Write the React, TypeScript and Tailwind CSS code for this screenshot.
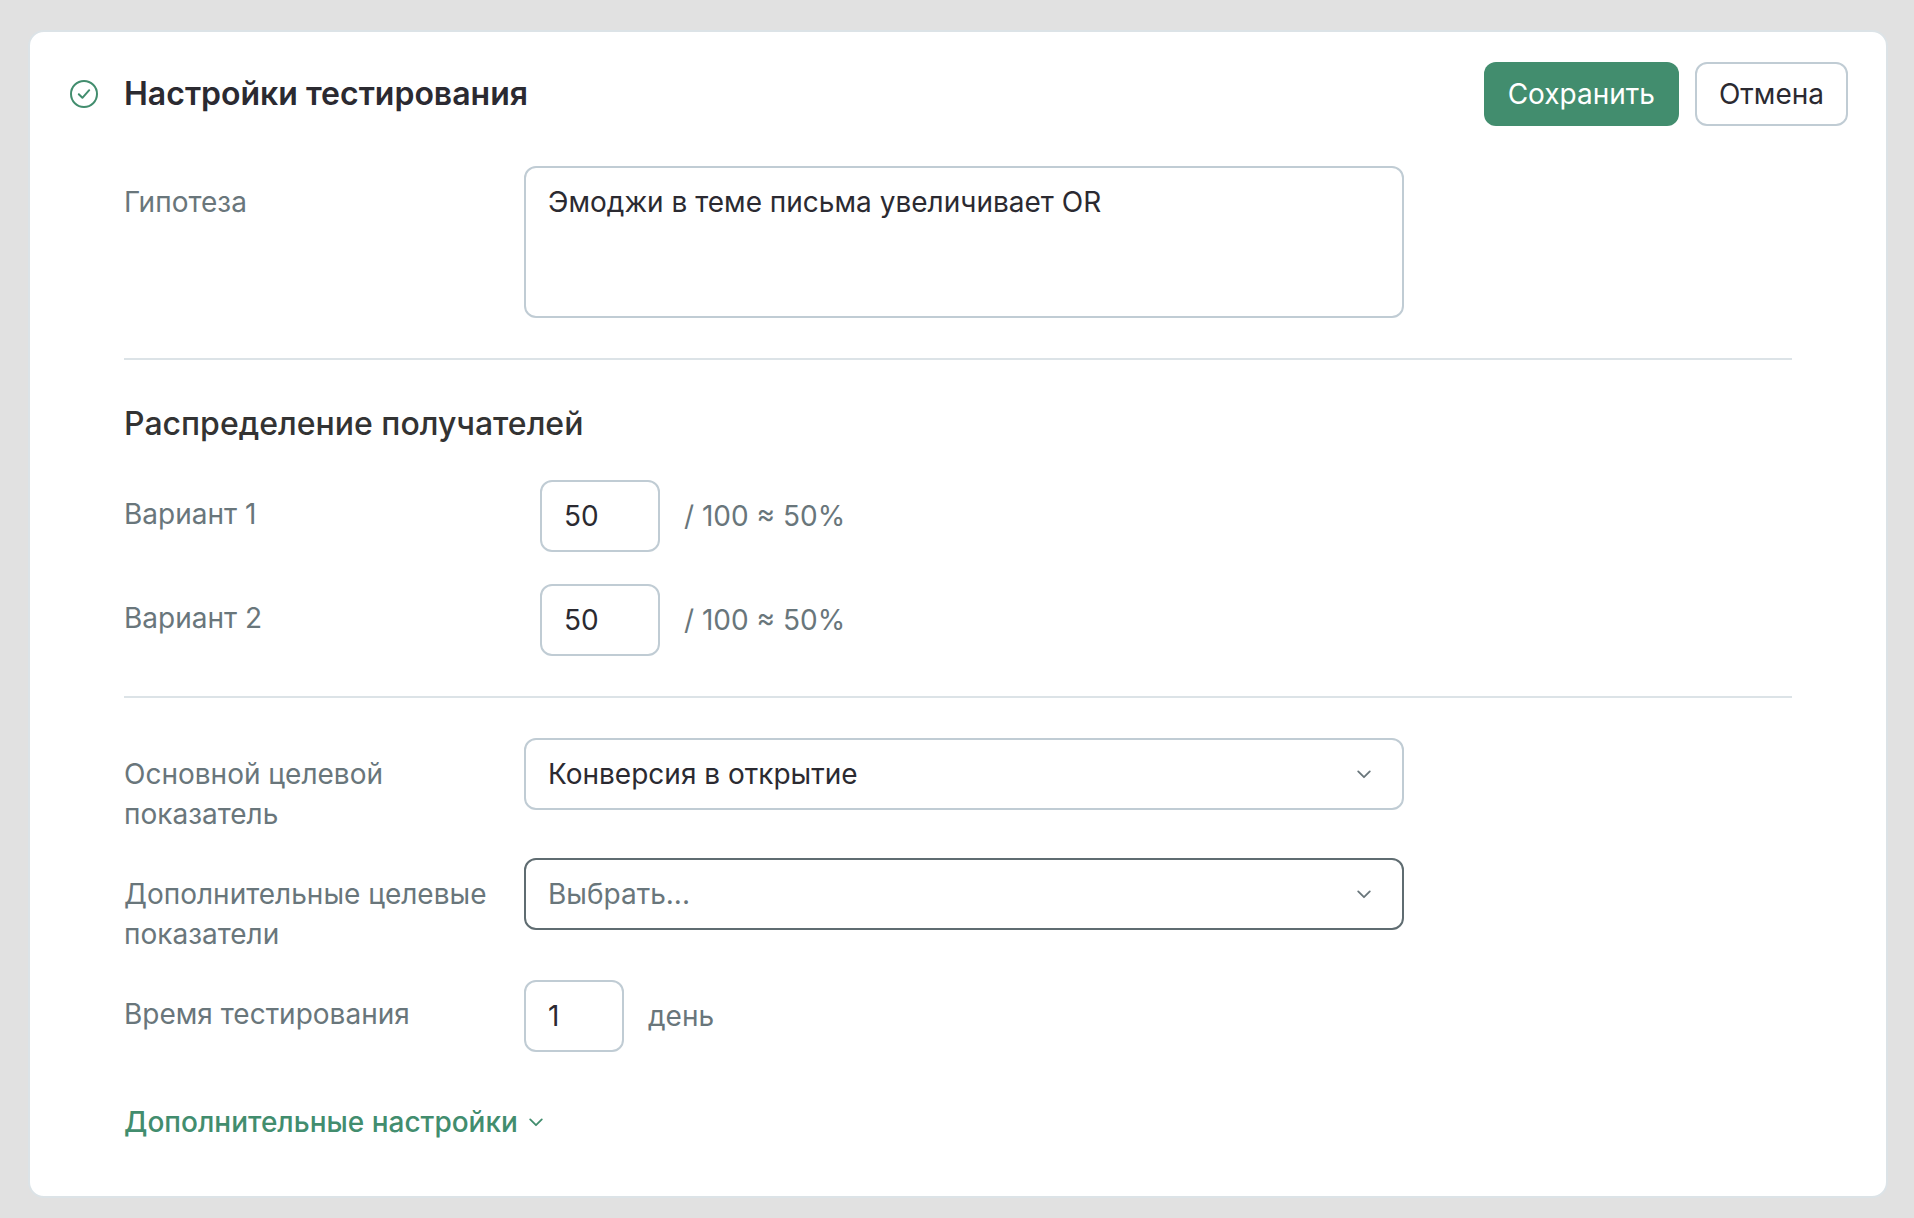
import * as React from "react";

interface IRowProps {
  label: string;
  htmlFor: string;
  children: React.ReactNode;
}

const Row: React.FC<IRowProps> = ({ label, htmlFor, children }) => (
  <div className="flex flex-row items-start">
    <label
      htmlFor={htmlFor}
      className="w-[400px] shrink-0 pt-4 pr-6 leading-10 text-[#69767b]"
    >
      {label}
    </label>
    {children}
  </div>
);

const Chevron: React.FC<{ classes?: string }> = ({ classes = "" }) => (
  <svg
    viewBox="0 0 16 16"
    fill="none"
    stroke="currentColor"
    strokeWidth="1.8"
    strokeLinecap="round"
    strokeLinejoin="round"
    aria-hidden="true"
    className={`size-4 ${classes}`}
  >
    <path d="M2.2 5.4 L8 11.2 L13.8 5.4" />
  </svg>
);

interface ISelectProps {
  id: string;
  options: string[];
  classes: string;
}

const Select: React.FC<ISelectProps> = ({ id, options, classes }) => (
  <div className="relative w-full max-w-[880px]">
    <select
      id={id}
      className={`block h-[72px] w-full appearance-none rounded-xl border-2 bg-white pl-[22px] pr-16 outline-none ${classes}`}
    >
      {options.map((option) => (
        <option key={option}>{option}</option>
      ))}
    </select>
    <Chevron classes="pointer-events-none absolute right-8 top-7 text-[#69767b]" />
  </div>
);

interface INumberProps {
  id: string;
  value: string;
  setValue: (value: string) => void;
  suffix: string;
  classes: string;
}

const NumberField: React.FC<INumberProps> = ({
  id,
  value,
  setValue,
  suffix,
  classes,
}) => (
  <div className={`mt-0.5 flex flex-row items-center gap-6 ${classes}`}>
    <input
      id={id}
      type="text"
      inputMode="numeric"
      value={value}
      onChange={(e) => setValue(e.target.value)}
      className="h-[72px] w-full rounded-xl border-2 border-[#c0ccd4] px-[22px] outline-none"
    />
    <span className="whitespace-nowrap text-[#69767b]">{suffix}</span>
  </div>
);

const App: React.FC = () => {
  const [hypothesis, setHypothesis] = React.useState<string>(
    "Эмоджи в теме письма увеличивает OR"
  );
  const [variants, setVariants] = React.useState<string[]>(["50", "50"]);
  const [days, setDays] = React.useState<string>("1");

  const changeVariant = (index: number, value: string) => {
    setVariants(variants.map((v, i) => (i === index ? value : v)));
  };

  return (
    <div
      className="min-h-screen bg-[#e1e1e1] pl-7 pr-[26px] pt-[30px] pb-5
      font-['Inter',sans-serif] text-[28px] leading-10 text-[#2b2a31]"
    >
      <main className="rounded-2xl border-2 border-[#dce3e7] bg-white pt-[30px] pb-[54px]">
        <header className="flex flex-row items-center pl-10 pr-[38px]">
          <svg
            viewBox="0 0 28 28"
            fill="none"
            stroke="currentColor"
            strokeWidth="2"
            aria-hidden="true"
            className="mr-[26px] size-7 shrink-0 text-[#428d6e]"
          >
            <circle cx="14" cy="14" r="13" />
            <path
              d="M8.8 14.2 L12.4 17.8 L19.2 10.2"
              strokeLinecap="round"
              strokeLinejoin="round"
            />
          </svg>
          <h1 className="grow text-[32px] font-semibold">
            Настройки тестирования
          </h1>
          <div className="flex flex-row gap-4">
            <button
              type="button"
              className="h-16 rounded-xl bg-[#428d6e] px-6 text-white"
            >
              Сохранить
            </button>
            <button
              type="button"
              className="h-16 rounded-xl border-2 border-[#c0ccd4] bg-white px-[22px]"
            >
              Отмена
            </button>
          </div>
        </header>

        <form className="px-[94px] pt-10">
          <section className="border-b-2 border-[#dce3e7] pb-10">
            <Row label="Гипотеза" htmlFor="hypothesis">
              <textarea
                id="hypothesis"
                value={hypothesis}
                onChange={(e) => setHypothesis(e.target.value)}
                className="block h-[152px] w-full max-w-[880px] resize-none rounded-xl
                border-2 border-[#c0ccd4] px-[22px] py-3.5 outline-none"
              />
            </Row>
          </section>

          <section className="border-b-2 border-[#dce3e7] pt-11 pb-10">
            <h2 className="mb-[34px] text-[32px] font-medium text-[#333333]">
              Распределение получателей
            </h2>
            <div className="flex flex-col gap-[30px]">
              {variants.map((value, index) => (
                <Row
                  key={index}
                  label={`Вариант ${index + 1}`}
                  htmlFor={`variant-${index + 1}`}
                >
                  <NumberField
                    id={`variant-${index + 1}`}
                    value={value}
                    setValue={(v) => changeVariant(index, v)}
                    suffix="/ 100 ≈ 50%"
                    classes="ml-4 [&>input]:max-w-[120px]"
                  />
                </Row>
              ))}
            </div>
          </section>

          <section className="flex flex-col gap-6 pt-10">
            <Row label="Основной целевой показатель" htmlFor="main-metric">
              <Select
                id="main-metric"
                options={["Конверсия в открытие"]}
                classes="border-[#c0ccd4]"
              />
            </Row>
            <Row label="Дополнительные целевые показатели" htmlFor="metrics">
              <Select
                id="metrics"
                options={["Выбрать..."]}
                classes="border-[#5f6c71] text-[#69767b]"
              />
            </Row>
            <Row label="Время тестирования" htmlFor="days">
              <NumberField
                id="days"
                value={days}
                setValue={setDays}
                suffix="день"
                classes="[&>input]:max-w-[100px]"
              />
            </Row>
          </section>

          <button
            type="button"
            className="mt-[50px] flex flex-row items-center gap-2.5 font-medium text-[#428d6e]"
          >
            Дополнительные настройки
            <Chevron />
          </button>
        </form>
      </main>
    </div>
  );
};

export default App;
